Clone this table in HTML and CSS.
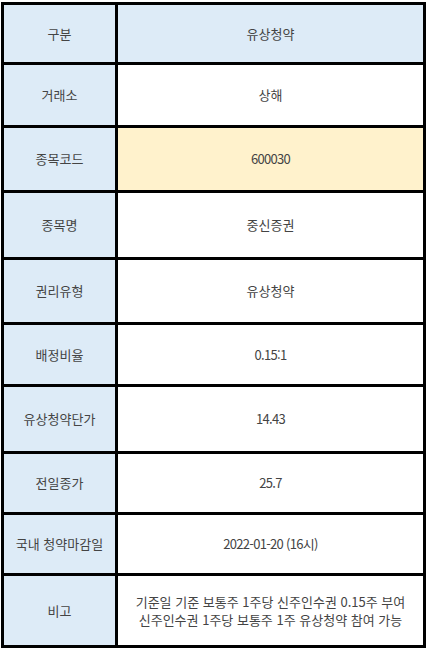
FILE: index.html
```html
<!DOCTYPE html>
<html lang="ko">
<head>
<meta charset="utf-8">
<link rel="stylesheet" href="styles.css">
</head>
<body>
<div class="sheet">
  <div class="cell head">구분</div><div class="cell head">유상청약</div>
  <div class="cell head">거래소</div><div class="cell">상해</div>
  <div class="cell head">종목코드</div><div class="cell hl num">600030</div>
  <div class="cell head">종목명</div><div class="cell">중신증권</div>
  <div class="cell head">권리유형</div><div class="cell">유상청약</div>
  <div class="cell head">배정비율</div><div class="cell num">0.15:1</div>
  <div class="cell head">유상청약단가</div><div class="cell num">14.43</div>
  <div class="cell head">전일종가</div><div class="cell num">25.7</div>
  <div class="cell head">국내 청약마감일</div><div class="cell num">2022-01-20 (16시)</div>
  <div class="cell head">비고</div><div class="cell">기준일 기준 보통주 1주당 신주인수권 0.15주 부여<br>신주인수권 1주당 보통주 1주 유상청약 참여 가능</div>
</div>
</body>
</html>
```
FILE: styles.css
```css
html, body {
  margin: 0;
  padding: 0;
  background: #fff;
}
body {
  padding: 2px 0 0 1px;
  font-family: "Noto Sans CJK KR", "Noto Sans", sans-serif;
  font-size: 13px;
  color: #444;
}
.sheet {
  display: grid;
  grid-template-columns: 114px 308px;
  grid-template-rows: 60px 63px 65px 67px 65px 62px 67px 61px 61px 72px;
  width: max-content;
  border-top: 3px solid #000;
  border-left: 3px solid #000;
}
.cell {
  box-sizing: border-box;
  border-right: 3px solid #000;
  border-bottom: 3px solid #000;
  display: flex;
  align-items: center;
  justify-content: center;
  text-align: center;
  line-height: 18px;
  background: #fff;
}
.head {
  background: #ddebf7;
}
.hl {
  background: #fff2cc;
}
.num {
  letter-spacing: -0.7px;
}
```
